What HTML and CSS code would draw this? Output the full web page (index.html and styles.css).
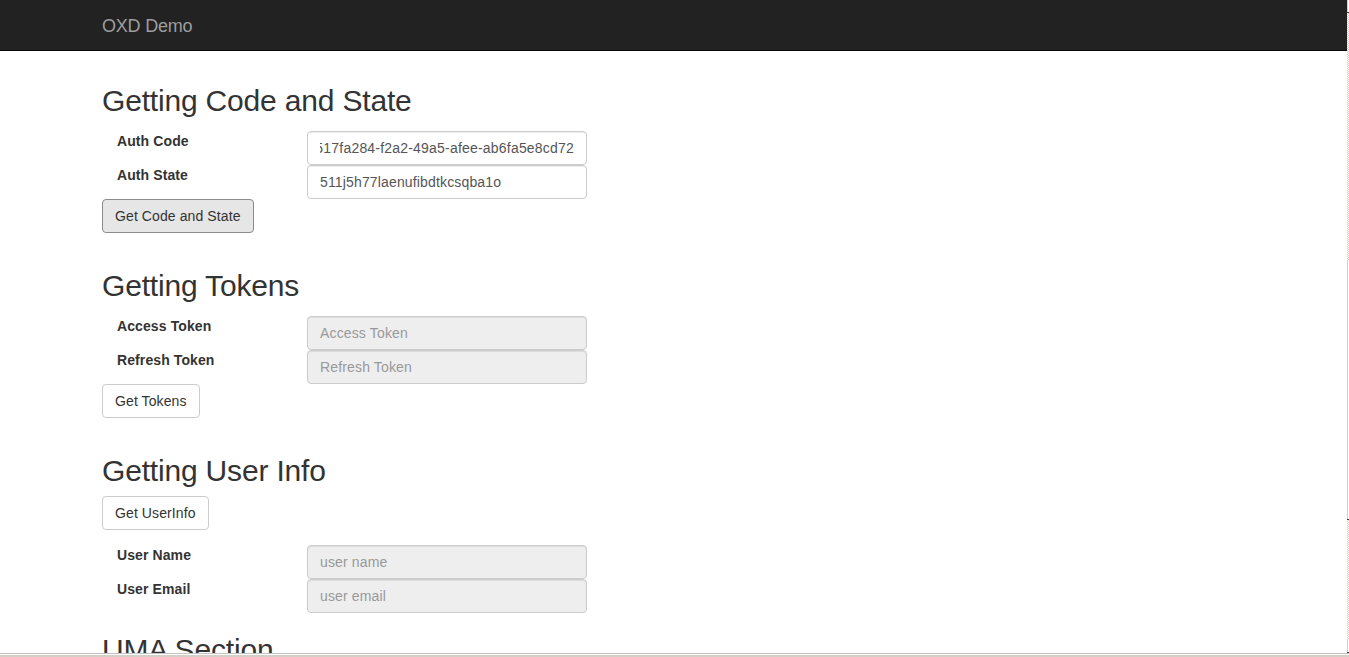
FILE: index.html
```html
<!DOCTYPE html>
<html lang="en">
<head>
<meta charset="utf-8">
<title>OXD Demo</title>
<link rel="stylesheet" href="styles.css">
</head>
<body>
<div class="screen">
  <div class="viewport">
    <div class="page">
      <nav class="navbar">
        <div class="container">
          <a class="brand" href="#">OXD Demo</a>
        </div>
      </nav>
      <main class="container content">
        <section class="section">
          <h2>Getting Code and State</h2>
          <div class="fields">
            <div class="field">
              <label class="field-label" for="authCode">Auth Code</label>
              <div class="form-control" id="authCode"><span class="value-clip"><span class="value-text">517fa284-f2a2-49a5-afee-ab6fa5e8cd72</span></span></div>
            </div>
            <div class="field">
              <label class="field-label" for="authState">Auth State</label>
              <input class="form-control" id="authState" type="text" value="511j5h77laenufibdtkcsqba1o">
            </div>
          </div>
          <div class="actions">
            <button class="btn btn-active" type="button">Get Code and State</button>
          </div>
        </section>

        <section class="section">
          <h2>Getting Tokens</h2>
          <div class="fields">
            <div class="field">
              <label class="field-label" for="accessToken">Access Token</label>
              <input class="form-control is-readonly" id="accessToken" type="text" placeholder="Access Token" readonly>
            </div>
            <div class="field">
              <label class="field-label" for="refreshToken">Refresh Token</label>
              <input class="form-control is-readonly" id="refreshToken" type="text" placeholder="Refresh Token" readonly>
            </div>
          </div>
          <div class="actions">
            <button class="btn" type="button">Get Tokens</button>
          </div>
        </section>

        <section class="section">
          <h2>Getting User Info</h2>
          <div class="actions actions-top">
            <button class="btn" type="button">Get UserInfo</button>
          </div>
          <div class="fields fields-after">
            <div class="field">
              <label class="field-label" for="userName">User Name</label>
              <input class="form-control is-readonly" id="userName" type="text" placeholder="user name" readonly>
            </div>
            <div class="field">
              <label class="field-label" for="userEmail">User Email</label>
              <input class="form-control is-readonly" id="userEmail" type="text" placeholder="user email" readonly>
            </div>
          </div>
        </section>

        <section class="section">
          <h2>UMA Section</h2>
        </section>
      </main>
    </div>
    <div class="strip">
      <div class="strip-cap"></div>
      <div class="strip-track strip-track-a"></div>
      <div class="strip-thumb"></div>
      <div class="strip-track strip-track-b"></div>
      <div class="strip-end"></div>
    </div>
  </div>
  <div class="hbar"></div>
</div>
</body>
</html>
```
FILE: styles.css
```css
* {
  box-sizing: border-box;
}

html, body {
  margin: 0;
  padding: 0;
}

body {
  font-family: "Liberation Sans", Arial, Helvetica, sans-serif;
  font-size: 14px;
  line-height: 20px;
  color: #333;
  background: #fff;
}

.screen {
  height: 100vh;
  display: flex;
  flex-direction: column;
  overflow: hidden;
}

.viewport {
  flex: 1;
  min-height: 0;
  display: flex;
}

.page {
  flex: 1;
  min-width: 0;
  overflow: hidden;
}

.container {
  width: 1173px;
  margin: 0 auto;
  padding: 0 15px;
}

/* Navbar */
.navbar {
  height: 51px;
  background: #222;
  border-bottom: 1px solid #080808;
}

.brand {
  display: inline-block;
  padding: 16px 0 14px;
  font-size: 18px;
  line-height: 20px;
  letter-spacing: -0.2px;
  color: #9d9d9d;
  text-decoration: none;
}

/* Content */
.content {
  display: flex;
  flex-direction: column;
  padding-top: 13px;
}

.section {
  display: flex;
  flex-direction: column;
  align-items: flex-start;
}

.section h2 {
  margin: 20px 0 9px;
  font-size: 30px;
  line-height: 33px;
  font-weight: 400;
  letter-spacing: -0.18px;
  color: #333;
  white-space: nowrap;
}

.fields {
  margin-top: 5px;
}

.fields-after {
  margin-top: 15px;
}

.field {
  display: flex;
  align-items: flex-start;
}

.field-label {
  width: 205px;
  padding-left: 15px;
  font-weight: 700;
  line-height: 20px;
  letter-spacing: 0.1px;
}

.form-control {
  display: block;
  width: 280px;
  height: 34px;
  padding: 6px 12px;
  font-family: inherit;
  font-size: 14px;
  line-height: 20px;
  letter-spacing: 0.15px;
  color: #555;
  background: #fff;
  border: 1px solid #ccc;
  border-radius: 4px;
  box-shadow: inset 0 1px 1px rgba(0, 0, 0, 0.075);
  outline: none;
  margin: 0;
}

.form-control::placeholder {
  color: #999;
  opacity: 1;
}

.form-control.is-readonly {
  background: #eee;
}

.value-clip {
  display: flex;
  justify-content: flex-end;
  overflow: hidden;
  white-space: nowrap;
  letter-spacing: 0.2px;
}

.value-text {
  flex: none;
}

.actions {
  margin-bottom: 16px;
}

.actions-top {
  margin-bottom: 0;
}

.btn {
  display: inline-block;
  margin: 0;
  padding: 6px 12px;
  font-family: inherit;
  font-size: 14px;
  line-height: 20px;
  letter-spacing: 0.1px;
  color: #333;
  background: #fff;
  border: 1px solid #ccc;
  border-radius: 4px;
  cursor: pointer;
}

.btn-active {
  background: #e6e6e6;
  border-color: #8c8c8c;
}

/* Right-edge scrollbar remnant */
.strip {
  width: 2px;
  flex: none;
  display: flex;
  flex-direction: column;
  background: #fff;
}

.strip-cap {
  height: 13px;
  background: linear-gradient(to right, #d4d0c8 1px, #fff 1px);
  border-bottom: 1px solid #404040;
}

.strip-track {
  background-image: repeating-conic-gradient(#d4d0c8 0 25%, #fff 0 50%);
  background-size: 2px 2px;
}

.strip-track-a {
  height: 247px;
}

.strip-thumb {
  height: 260px;
  background: linear-gradient(to right, #d4d0c8 1px, #fff 1px);
  border-bottom: 1px solid #404040;
}

.strip-track-b {
  flex: 1;
}

.strip-end {
  height: 14px;
  background: linear-gradient(to right, #d4d0c8 1px, #fff 1px);
  border-bottom: 1px solid #404040;
}

/* Bottom scrollbar remnant */
.hbar {
  height: 4px;
  flex: none;
  border-top: 1px solid #c4c4c4;
  background: linear-gradient(#fff 1px, #d4d0c8 1px);
}
```
